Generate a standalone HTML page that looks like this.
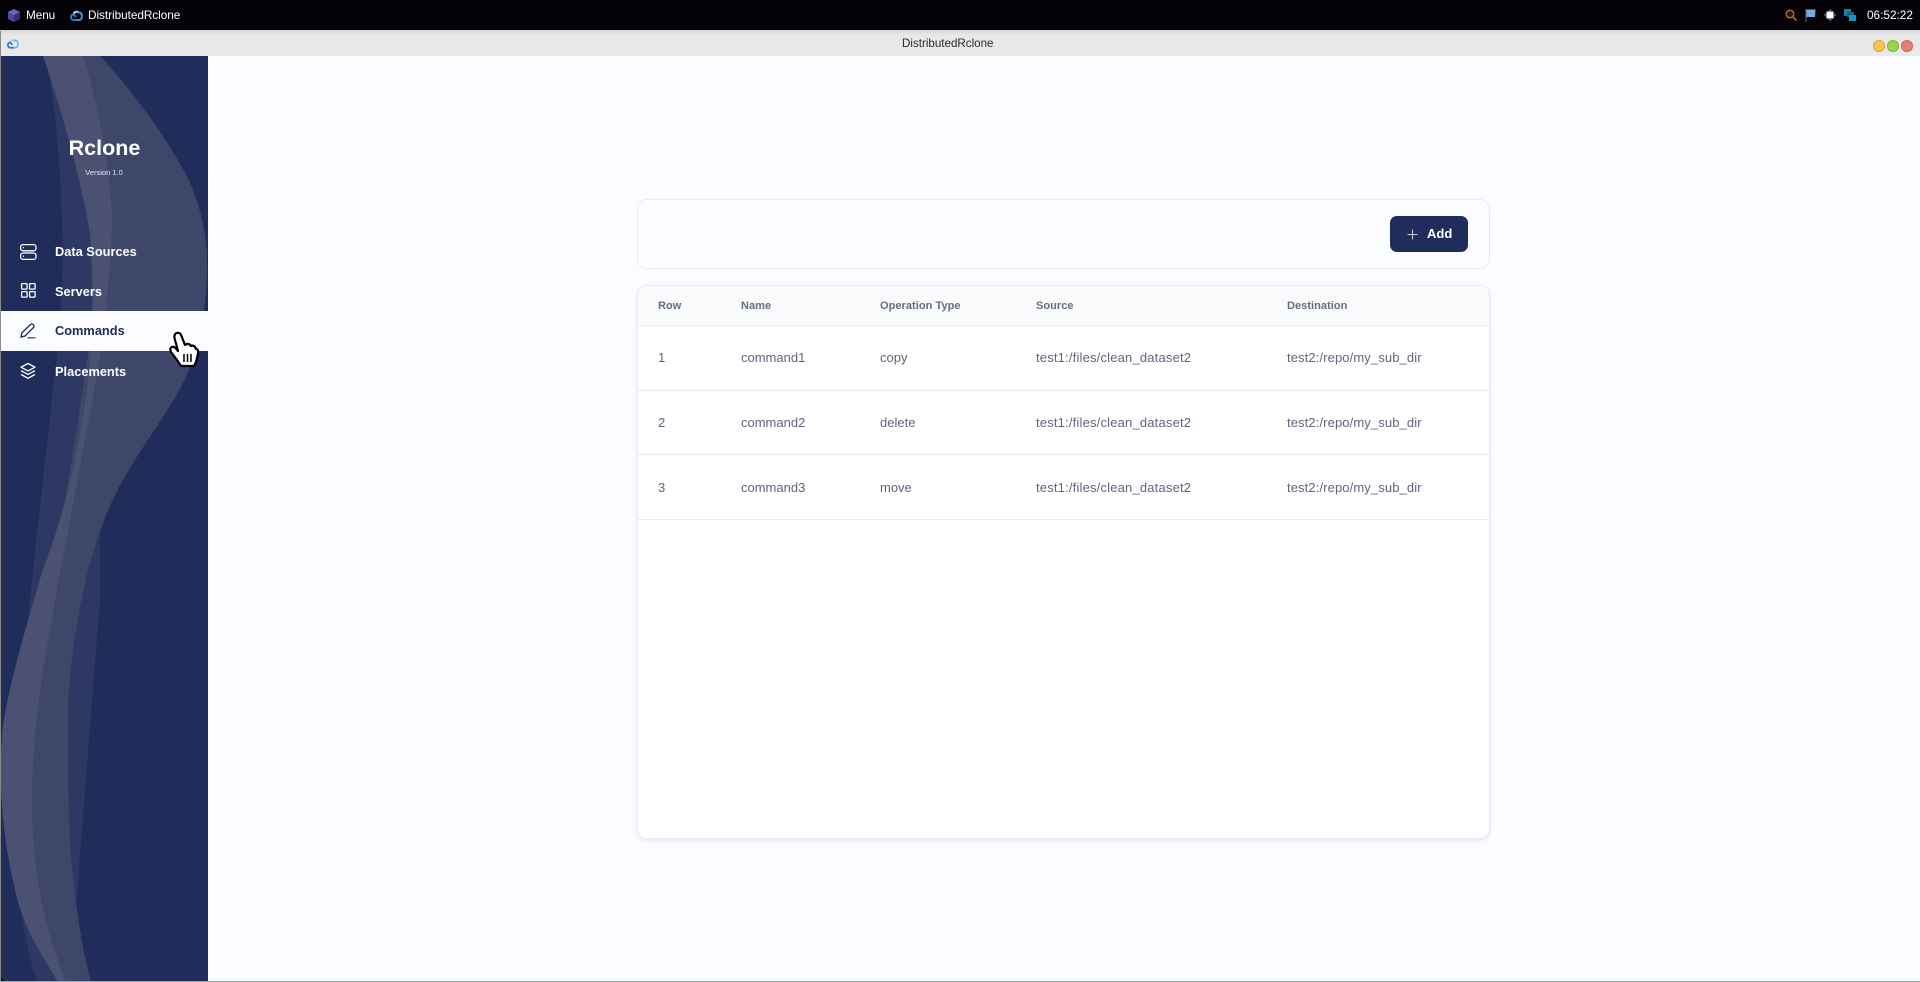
<!DOCTYPE html>
<html><head><meta charset="utf-8"><title>DistributedRclone</title>
<style>
html,body{margin:0;padding:0;width:1920px;height:982px;overflow:hidden;background:#0a0a12}
body{position:relative;font-family:"Liberation Sans",sans-serif}
.a{position:absolute;white-space:nowrap}
#top{left:0;top:0;width:1920px;height:30px;background:#050308}
#tb{left:0;top:30px;width:1920px;height:26px;background:linear-gradient(#d8d8d8,#e8e8e8 5px,#e9e9e9)}
#main{left:1px;top:56px;width:1919px;height:925px;background:#fbfcff;border-bottom-left-radius:7px}
#edge{left:0;top:31px;width:1px;height:951px;background:#8a8a8a}
#edgeb{left:0;top:981px;width:1920px;height:1px;background:#a0a3b0}
.bar{color:#fff;font-size:11.800px;line-height:14px;top:8px}
#side{position:absolute;left:1px;top:56px;width:207px;height:925px;overflow:hidden;background:#202c5a;border-bottom-left-radius:7px}
.nav{left:55px;font-size:12.800px;font-weight:700;color:#fff;line-height:16px}
.card{box-sizing:border-box;left:637px;width:853px;border:1px solid #e8eaf0;border-radius:10px}
.th{font-size:11px;font-weight:700;color:#666d83;line-height:14px;top:299px;letter-spacing:.05px}
.td{font-size:13px;color:#5f667d;line-height:16px}
.s{letter-spacing:.18px}
.d{letter-spacing:.11px}
.ln{left:638px;width:851px;height:1px;background:#e9ebf0}
</style></head><body>
<div class="a" id="top"></div>
<svg class="a" style="left:7px;top:8px" width="14" height="15" viewBox="0 0 14 15"><path d="M7 1l6 3v7l-6 3-6-3V4z" fill="#4a4aa0"/><path d="M7 7l6-3v7l-6 3z" fill="#2f2f78"/><path d="M7 1l6 3-6 3-6-3z" fill="#6464bc"/></svg>
<div class="a bar" style="left:26px;letter-spacing:-.1px">Menu</div>
<svg class="a" style="left:70px;top:8px" width="13" height="14" viewBox="0 0 14 14" fill="none" stroke-width="2"><path d="M3.800 6.500A3.400 3.400 0 0 1 10 5" stroke="#cfe6f7"/><path d="M7.500 4.500A3.300 3.300 0 0 1 12.500 8 A3.300 3.300 0 0 1 9.500 12.500H6" stroke="#4a9ad8"/><path d="M8 12.500H4A3.200 3.200 0 0 1 3.200 6.300L6.500 9" stroke="#2f7fc2"/></svg>
<div class="a bar" style="left:88px;letter-spacing:-.05px">DistributedRclone</div>
<svg class="a" style="left:1784px;top:8px" width="14" height="14" viewBox="0 0 14 14" fill="none"><circle cx="6" cy="6" r="3.800" fill="#1c1a1a" stroke="#ae6520" stroke-width="1.500"/><path d="M9 9l3.500 3.500" stroke="#ae6520" stroke-width="1.700"/></svg>
<svg class="a" style="left:1805px;top:9px" width="11" height="13" viewBox="0 0 11 13"><path d="M1 0v13" stroke="#5c5c5c" stroke-width="1.200"/><path d="M1.500 .5h9l-.5 7.500h-8.500z" fill="#7da9dc"/></svg>
<svg class="a" style="left:1824px;top:9px" width="12" height="12" viewBox="0 0 12 12"><path d="M6 0l2 2H4zM6 12l2-2H4zM0 6l2 2V4zM12 6l-2 2V4z" fill="#54709f"/><rect x="2.500" y="2.500" width="7" height="7" fill="#fff"/></svg>
<svg class="a" style="left:1844px;top:9px" width="12" height="12" viewBox="0 0 12 12"><rect x="0" y="0" width="7" height="7" fill="#1a7fa5"/><rect x="3" y="3" width="7" height="5" fill="#145f85"/><rect x="5" y="6" width="7" height="6" fill="#0f97c4"/></svg>
<div class="a bar" style="left:1867px">06:52:22</div>

<div class="a" id="tb"></div>
<svg class="a" style="left:7px;top:37px" width="12" height="12" viewBox="0 0 14 14" fill="none" stroke-width="2"><path d="M3.800 6.500A3.400 3.400 0 0 1 10 5" stroke="#9fd0f2"/><path d="M7.500 4.500A3.300 3.300 0 0 1 12.500 8 A3.300 3.300 0 0 1 9.500 12.500H6" stroke="#6fb8ea"/><path d="M8 12.500H4A3.200 3.200 0 0 1 3.200 6.300L6.500 9" stroke="#2f7fc2"/></svg>
<div class="a" style="left:902px;top:37px;font-size:11.600px;color:#2a2a2a;line-height:14px">DistributedRclone</div>
<div class="a" style="left:1873px;top:40px;width:12px;height:12px;border-radius:50%;background:#f6c451;box-shadow:inset 0 0 0 1px #d9a83f"></div>
<div class="a" style="left:1887px;top:40px;width:12px;height:12px;border-radius:50%;background:#98d64e;box-shadow:inset 0 0 0 1px #80b83f"></div>
<div class="a" style="left:1901px;top:40px;width:12px;height:12px;border-radius:50%;background:#e97f73;box-shadow:inset 0 0 0 1px #cb6a60"></div>

<div class="a" id="main"></div>
<div id="side">
<svg style="position:absolute;left:-1px;top:-56px" width="208" height="982" viewBox="0 0 208 982">
<path d="M45 56C55 100 60 160 62 220C64 280 60 340 54 380C48 440 38 520 30 600C22 680 14 780 18 880C22 930 30 960 37 982L70 982L100 600L100 56Z" fill="#2d3962"/>
<path d="M100 56C125 82 170 140 190 183C200 205 207 235 207 260C208 300 200 350 182 385C165 418 135 455 115 495C98 530 85 575 77 625C70 665 67 700 68 735C68 770 68 805 70 840C73 890 80 940 91 982L60 982C42 940 26 880 26 802C28 740 38 670 46 610C54 560 70 480 84 380C92 330 100 280 100 217C96 170 84 110 65 56Z" fill="#3e4669"/>
<path d="M43 56C60 105 80 175 90 233C94 290 93 340 88 380C82 430 70 500 42 572C30 615 12 670 3 725C-2 770 0 830 17 898C25 930 42 955 58 982L66 982C50 940 33 890 32 802C32 740 42 670 50 630C60 570 78 480 96 380C102 345 112 270 112 217C110 170 100 110 83 56Z" fill="#4a5172"/>
</svg>
</div>
<div class="a" style="left:1px;top:311px;width:207px;height:40px;background:#fbfcff"></div>
<div class="a" style="left:64px;top:135px;width:81px;text-align:center;font-size:21.500px;font-weight:700;color:#fff;line-height:26px">Rclone</div>
<div class="a" style="left:74px;top:167.500px;width:60px;text-align:center;font-size:7.500px;color:#e6e8f0;line-height:10px">Version 1.0</div>

<svg class="a" style="left:19px;top:243px" width="18" height="18" viewBox="0 0 18 18" fill="none" stroke="#fff" stroke-width="1.300"><rect x="1.600" y="1.600" width="15.400" height="6.200" rx="2.400"/><rect x="1.600" y="10" width="15.400" height="6.400" rx="2.400"/><path d="M4 4.600h1M4 13.200h1"/></svg>
<div class="a nav" style="top:244px">Data Sources</div>
<svg class="a" style="left:19px;top:282px" width="18" height="18" viewBox="0 0 18 18" fill="none" stroke="#fff" stroke-width="1.300"><rect x="2.600" y="1.600" width="5.500" height="5.500" rx=".8"/><rect x="10.600" y="1.600" width="5.500" height="5.500" rx=".8"/><rect x="2.600" y="9.600" width="5.500" height="5.500" rx=".8"/><rect x="10.600" y="9.600" width="5.500" height="5.500" rx=".8"/></svg>
<div class="a nav" style="top:284px">Servers</div>
<svg class="a" style="left:19px;top:322px" width="18" height="18" viewBox="0 0 18 18" fill="none" stroke="#202c5a" stroke-width="1.300"><path d="M2 15l.8-4L11.500 2.500a1.700 1.700 0 0 1 2.600 0l.4.400a1.800 1.800 0 0 1 0 2.600L6 14z"/><path d="M2 15l4-1"/><path d="M8.500 15.800h8" stroke-width="1.400" stroke="#4d567c"/></svg>
<div class="a nav" style="top:323px;color:#202c5a">Commands</div>
<svg class="a" style="left:19px;top:362px" width="18" height="18" viewBox="0 0 18 18" fill="none" stroke="#fff" stroke-width="1.300" stroke-linejoin="round"><path d="M9 1.500l7 3.700-7 3.700-7-3.700z"/><path d="M2 8.700l7 3.700 7-3.700"/><path d="M2 12.400l7 3.900 7-3.900"/></svg>
<div class="a nav" style="top:364px">Placements</div>

<svg class="a" style="left:0;top:0" width="208" height="382" viewBox="0 0 208 382"><path d="M174.500 338C173.500 332 180 331 181.500 336L185 345C187 343 190 344 191 346C193 345 195 346 196 349C198 349 198.500 351 198 354L196 362L194 366L181 366L177 360L171 352C169 348 172 345 175.500 348L178 351Z" fill="#fff" stroke="#000" stroke-width="2.200" stroke-linejoin="round"/><path d="M184 354v8M187.500 354v8M191 354v8" stroke="#000" stroke-width="1.500"/></svg>

<div class="a card" style="top:199px;height:70px;background:#fbfcff"></div>
<div class="a" style="left:1390px;top:216px;width:78px;height:36px;border-radius:7px;background:#202c5a"></div>
<svg class="a" style="left:1407px;top:229px" width="11" height="11" viewBox="0 0 11 11"><path d="M5.500 .5v10M.5 5.500h10" stroke="#c4c8d6" stroke-width="1.100"/></svg>
<div class="a" style="left:1427px;top:226px;font-size:13px;font-weight:700;color:#fff;line-height:16px">Add</div>

<div class="a card" style="top:285px;height:554px;background:#fff;box-shadow:0 2px 5px rgba(30,40,80,.08)"></div>
<div class="a" style="left:638px;top:286px;width:851px;height:39px;background:#f9fafc;border-radius:9px 9px 0 0"></div>
<div class="a ln" style="top:325px"></div>
<div class="a ln" style="top:390px"></div>
<div class="a ln" style="top:454px"></div>
<div class="a ln" style="top:519px"></div>
<div class="a th" style="left:658px">Row</div>
<div class="a th" style="left:741px">Name</div>
<div class="a th" style="left:880px">Operation Type</div>
<div class="a th" style="left:1036px">Source</div>
<div class="a th" style="left:1287px">Destination</div>

<div class="a td" style="left:658px;top:350px">1</div>
<div class="a td" style="left:741px;top:350px">command1</div>
<div class="a td" style="left:880px;top:350px">copy</div>
<div class="a td s" style="left:1036px;top:350px">test1:/files/clean_dataset2</div>
<div class="a td d" style="left:1287px;top:350px">test2:/repo/my_sub_dir</div>

<div class="a td" style="left:658px;top:415px">2</div>
<div class="a td" style="left:741px;top:415px">command2</div>
<div class="a td" style="left:880px;top:415px">delete</div>
<div class="a td s" style="left:1036px;top:415px">test1:/files/clean_dataset2</div>
<div class="a td d" style="left:1287px;top:415px">test2:/repo/my_sub_dir</div>

<div class="a td" style="left:658px;top:480px">3</div>
<div class="a td" style="left:741px;top:480px">command3</div>
<div class="a td" style="left:880px;top:480px">move</div>
<div class="a td s" style="left:1036px;top:480px">test1:/files/clean_dataset2</div>
<div class="a td d" style="left:1287px;top:480px">test2:/repo/my_sub_dir</div>

<div class="a" id="edge"></div>
<div class="a" id="edgeb"></div>
</body></html>
